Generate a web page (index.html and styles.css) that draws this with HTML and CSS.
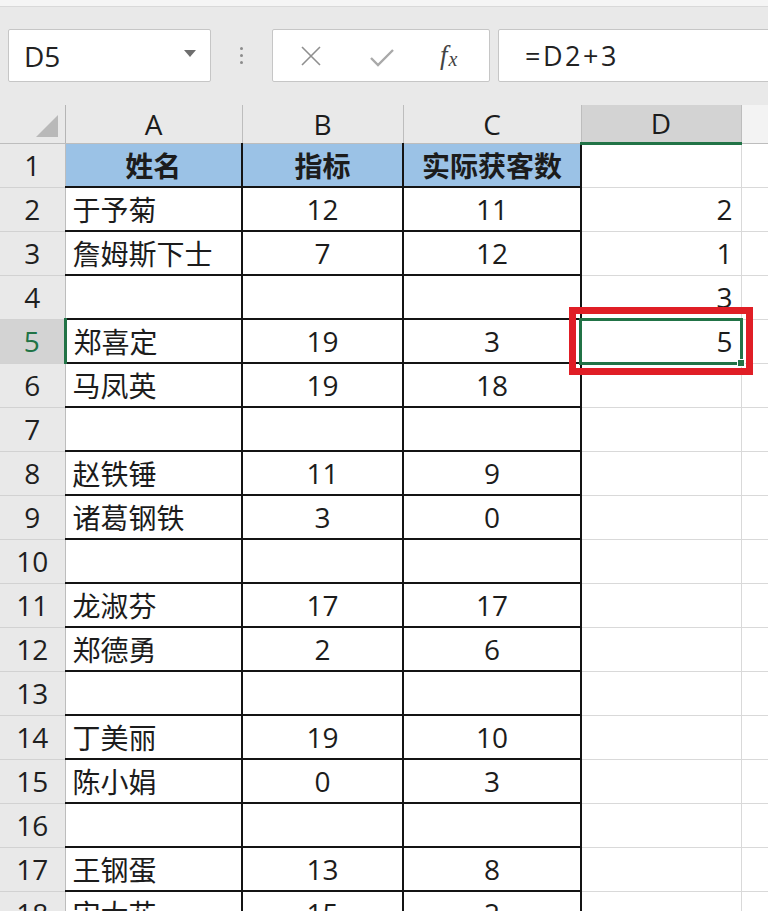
FILE: index.html
```html
<!DOCTYPE html>
<html lang="zh-CN">
<head>
<meta charset="utf-8">
<title>Sheet</title>
<link rel="stylesheet" href="styles.css">
</head>
<body>
<div class="topstrip"></div>
<div class="fbar">
  <div class="namebox"><span>D5</span><span class="dd"></span></div>
  <div class="dots"><i></i><i></i><i></i></div>
  <div class="btns">
    <svg class="ico-x" width="22" height="22" viewBox="0 0 22 22"><path d="M2 2 L20 20 M20 2 L2 20" stroke="#8f8f8f" stroke-width="1.6" fill="none"/></svg>
    <svg class="ico-ok" width="26" height="20" viewBox="0 0 26 20"><path d="M2 10 L9 17 L24 2" stroke="#a9a9a9" stroke-width="2.4" fill="none"/></svg>
    <span class="fx">f<sub>x</sub></span>
  </div>
  <div class="formula">=D2+3</div>
</div>
<table class="sheet">
  <colgroup>
    <col class="c-rh"><col class="c-a"><col class="c-b"><col class="c-c"><col class="c-d"><col class="c-e">
  </colgroup>
  <thead>
    <tr class="hdr">
      <th class="corner"><span class="tri"></span></th>
      <th>A</th><th>B</th><th>C</th><th class="hsel">D</th><th class="he"></th>
    </tr>
  </thead>
  <tbody>
    <tr><th class="rh">1</th><td class="t a head">姓名</td><td class="t b head">指标</td><td class="t c head">实际获客数</td><td class="g"></td><td class="g"></td></tr>
    <tr><th class="rh">2</th><td class="t a">于予菊</td><td class="t b">12</td><td class="t c">11</td><td class="g n">2</td><td class="g"></td></tr>
    <tr><th class="rh">3</th><td class="t a">詹姆斯下士</td><td class="t b">7</td><td class="t c">12</td><td class="g n">1</td><td class="g"></td></tr>
    <tr><th class="rh">4</th><td class="t a"></td><td class="t b"></td><td class="t c"></td><td class="g n">3</td><td class="g"></td></tr>
    <tr><th class="rh rsel">5</th><td class="t a">郑喜定</td><td class="t b">19</td><td class="t c">3</td><td class="g n sel">5<span class="selbox"></span><span class="handle"></span><span class="mark"></span></td><td class="g"></td></tr>
    <tr><th class="rh">6</th><td class="t a">马凤英</td><td class="t b">19</td><td class="t c">18</td><td class="g"></td><td class="g"></td></tr>
    <tr><th class="rh">7</th><td class="t a"></td><td class="t b"></td><td class="t c"></td><td class="g"></td><td class="g"></td></tr>
    <tr><th class="rh">8</th><td class="t a">赵铁锤</td><td class="t b">11</td><td class="t c">9</td><td class="g"></td><td class="g"></td></tr>
    <tr><th class="rh">9</th><td class="t a">诸葛钢铁</td><td class="t b">3</td><td class="t c">0</td><td class="g"></td><td class="g"></td></tr>
    <tr><th class="rh">10</th><td class="t a"></td><td class="t b"></td><td class="t c"></td><td class="g"></td><td class="g"></td></tr>
    <tr><th class="rh">11</th><td class="t a">龙淑芬</td><td class="t b">17</td><td class="t c">17</td><td class="g"></td><td class="g"></td></tr>
    <tr><th class="rh">12</th><td class="t a">郑德勇</td><td class="t b">2</td><td class="t c">6</td><td class="g"></td><td class="g"></td></tr>
    <tr><th class="rh">13</th><td class="t a"></td><td class="t b"></td><td class="t c"></td><td class="g"></td><td class="g"></td></tr>
    <tr><th class="rh">14</th><td class="t a">丁美丽</td><td class="t b">19</td><td class="t c">10</td><td class="g"></td><td class="g"></td></tr>
    <tr><th class="rh">15</th><td class="t a">陈小娟</td><td class="t b">0</td><td class="t c">3</td><td class="g"></td><td class="g"></td></tr>
    <tr><th class="rh">16</th><td class="t a"></td><td class="t b"></td><td class="t c"></td><td class="g"></td><td class="g"></td></tr>
    <tr><th class="rh">17</th><td class="t a">王钢蛋</td><td class="t b">13</td><td class="t c">8</td><td class="g"></td><td class="g"></td></tr>
    <tr><th class="rh">18</th><td class="t a">宋大花</td><td class="t b">15</td><td class="t c">2</td><td class="g"></td><td class="g"></td></tr>
  </tbody>
</table>
</body>
</html>
```
FILE: styles.css
```css
* { box-sizing: border-box; }
html, body { margin: 0; padding: 0; }
body {
  width: 768px;
  height: 911px;
  overflow: hidden;
  background: #ffffff;
  font-family: "Open Sans", "Noto Sans CJK SC", sans-serif;
  color: #1c1c1c;
}
.topstrip {
  height: 7px;
  background: #f5f5f5;
  border-bottom: 1px solid #d9d9d9;
}
.fbar {
  display: flex;
  height: 98px;
  padding: 22px 0 23px 8px;
  background: #e9e9e9;
}
.namebox {
  width: 203px;
  background: #fff;
  border: 1px solid #c6c6c6;
  border-radius: 2px;
  display: flex;
  align-items: center;
  justify-content: space-between;
  padding: 0 14px 0 15px;
  font-size: 28px;
  color: #222;
}
.dd {
  width: 0; height: 0;
  border-left: 6px solid transparent;
  border-right: 6px solid transparent;
  border-top: 7px solid #6e6e6e;
  margin-top: -4px;
}
.dots {
  width: 61px;
  display: flex;
  flex-direction: column;
  align-items: center;
  justify-content: center;
  gap: 4px;
}
.dots i {
  display: block;
  width: 3px; height: 3px;
  border-radius: 50%;
  background: #8c8c8c;
}
.btns {
  width: 218px;
  background: #fff;
  border: 1px solid #c6c6c6;
  border-radius: 2px;
  display: flex;
  align-items: center;
  padding-left: 27px;
}
.ico-x { margin-right: 47px; }
.ico-ok { margin-right: 45px; margin-top: 4px; }
.fx {
  font-family: "Liberation Serif", serif;
  font-style: italic;
  font-size: 27px;
  color: #444;
}
.fx sub { font-size: 20px; vertical-align: -2px; margin-left: 1px; }
.formula {
  flex: 1;
  margin-left: 8px;
  margin-right: -6px;
  background: #fff;
  border: 1px solid #c6c6c6;
  border-radius: 2px;
  display: flex;
  align-items: center;
  padding-left: 26px;
  font-size: 27px;
  letter-spacing: 2.5px;
  color: #222;
}

.sheet {
  border-collapse: collapse;
  table-layout: fixed;
  width: 790px;
  font-size: 28px;
}
.c-rh { width: 65px; }
.c-a { width: 177px; }
.c-b { width: 161px; }
.c-c { width: 178px; }
.c-d { width: 160px; }
.c-e { width: 49px; }

.hdr th {
  height: 38px;
  padding: 0;
  background: #e9e9e9;
  font-weight: normal;
  font-size: 28px;
  color: #1c1c1c;
  border-right: 1px solid #bdbdbd;
  border-bottom: 1px solid #bdbdbd;
  line-height: 34px;
}
.hdr th.corner {
  vertical-align: bottom;
  padding: 0 7px 6px 0;
  border-right: 1px solid #b5b5b5;
  line-height: 0;
}
.tri {
  display: block;
  margin-left: auto;
  width: 0; height: 0;
  border-left: 22px solid transparent;
  border-bottom: 22px solid #b9b9b9;
}
.hdr th.hsel {
  background: #d3d3d3;
  border-bottom: 3px solid #217346;
}
.hdr th.he { background: #f3f3f3; border-right: 0; }

tbody tr { height: 44px; }
.rh {
  padding: 0;
  background: #e9e9e9;
  font-weight: normal;
  text-align: center;
  color: #1f1f1f;
  border-bottom: 1px solid #d2d2d2;
  border-right: 1px solid #bdbdbd;
}
.rh.rsel {
  background: #d3d3d3;
  color: #217346;
  border-right: 3px solid #217346;
}
td {
  padding: 0;
  vertical-align: middle;
  white-space: nowrap;
  overflow: visible;
}
td.t {
  border-top: 2px solid #141414;
  border-bottom: 2px solid #141414;
  border-right: 2px solid #141414;
}
td.a { text-align: left; padding-left: 7px; }
td.b, td.c { text-align: center; }
td.head {
  background: #9bc2e6;
  font-weight: bold;
  border-top: 0;
  text-align: center;
  padding-left: 0;
}
td.g {
  border: 1px solid #d9d9d9;
  border-top: 1px solid #d9d9d9;
  text-align: right;
  padding-right: 8px;
}
td.g:last-child { border-right: 0; }
td.sel { position: relative; }
.selbox {
  position: absolute;
  left: -3px; top: -2px; right: -2px; bottom: -2px;
  border: 3px solid #217346;
}
.handle {
  position: absolute;
  right: -4px; bottom: -4px;
  width: 8px; height: 8px;
  background: #217346;
  border: 1px solid #fff;
}
.mark {
  position: absolute;
  left: -13px; top: -13px; right: -12px; bottom: -12px;
  border: 7px solid #e01e26;
}
```
